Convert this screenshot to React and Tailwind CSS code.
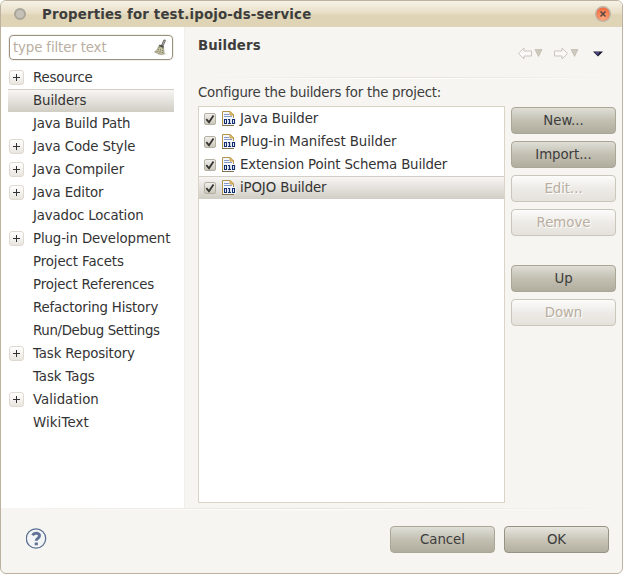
const tree = [
  { label: 'Resource', children: true, tracking: 'tracking-[-0.2px]' },
  { label: 'Builders', selected: true, tracking: 'tracking-[-0.1px]' },
  { label: 'Java Build Path', tracking: 'tracking-[-0.13px]' },
  { label: 'Java Code Style', children: true, tracking: 'tracking-[-0.13px]' },
  { label: 'Java Compiler', children: true, tracking: 'tracking-[-0.1px]' },
  { label: 'Java Editor', children: true, tracking: 'tracking-[-0.13px]' },
  { label: 'Javadoc Location', tracking: 'tracking-[-0.14px]' },
  { label: 'Plug-in Development', children: true, tracking: 'tracking-[-0.12px]' },
  { label: 'Project Facets', tracking: 'tracking-[-0.1px]' },
  { label: 'Project References', tracking: 'tracking-[-0.16px]' },
  { label: 'Refactoring History', tracking: 'tracking-[-0.16px]' },
  { label: 'Run/Debug Settings', tracking: 'tracking-[-0.34px]' },
  { label: 'Task Repository', children: true, tracking: 'tracking-[-0.14px]' },
  { label: 'Task Tags', tracking: 'tracking-[-0.1px]' },
  { label: 'Validation', children: true, tracking: 'tracking-normal' },
  { label: 'WikiText', tracking: 'tracking-[0.1px]' },
];

const builders = [
  { label: 'Java Builder', tracking: 'tracking-[-0.12px]' },
  { label: 'Plug-in Manifest Builder', tracking: 'tracking-[-0.07px]' },
  { label: 'Extension Point Schema Builder', tracking: 'tracking-[-0.16px]' },
  { label: 'iPOJO Builder', selected: true, tracking: 'tracking-[-0.12px]' },
];

const selectedRow = 'border-t border-[#d2cec5] bg-linear-to-b from-[#f7f6f4] to-[#d0cdc4]';

function Expander() {
  return (
    <span className="flex size-[15px] items-center justify-center rounded-[3px] border border-[#dfd9cf] bg-linear-to-b from-white to-[#e9e6e0]">
      <svg width="7" height="7" viewBox="0 0 7 7" shapeRendering="crispEdges">
        <path d="M0 3h7v1H0zM3 0h1v7H3z" fill="#333" />
      </svg>
    </span>
  );
}

function Broom() {
  return (
    <svg width="14" height="17" viewBox="0 0 14 17">
      <ellipse cx="9" cy="15" rx="4.500" ry="1.200" fill="#e6e4dc" />
      <path d="M11.500 1.800 9.300 6.500" stroke="#6c6b66" strokeWidth="2.600" strokeLinecap="round" />
      <path d="M11.600 1.800 9.600 6" stroke="#b5b3aa" strokeWidth=".9" />
      <path d="m6 6.500 4.500 1.800.7 6.200-2.700 1-3-.8L1.500 13C4 11.500 5 9 6 6.500Z" fill="#cbc8a8" stroke="#85836b" strokeWidth=".6" />
      <path d="M6.500 8 4 13.500M8 8.500l-1.500 6M9.800 9l-.5 6M5 10.500l6 1.500M3.500 12.500l7.500 1.500" stroke="#77745c" strokeWidth=".8" strokeDasharray="1 1" />
      <path d="m6.300 6.300 4.400 1.900" stroke="#4c4b45" strokeWidth="1.500" />
    </svg>
  );
}

function CheckBox() {
  return (
    <svg width="12" height="12" viewBox="0 0 12 12">
      <defs>
        <linearGradient id="check-face" x1="0" y1="0" x2="0" y2="1">
          <stop offset="0" stopColor="#f1f0ec" />
          <stop offset="1" stopColor="#c9c6b9" />
        </linearGradient>
      </defs>
      <rect x=".5" y=".5" width="11" height="11" rx="1.500" fill="url(#check-face)" stroke="#b4b1a3" />
      <path d="M2.300 6.200 5 9.300 9.500 2.500" fill="none" stroke="#333330" strokeWidth="1.800" />
    </svg>
  );
}

function BuilderIcon() {
  return (
    <svg width="14" height="15" viewBox="0 0 14 15">
      <path d="M.5 14.500V.5H8L11.500 4v10.500Z" fill="#f4f7fd" stroke="#b2934a" />
      <path d="M8 .5V4h3.500Z" fill="#f0cd7c" stroke="#c09a45" />
      <path d="M2 3.500h5M2 5.500h8" stroke="#8598c8" />
      <path d="M1 7h13v7H1z" fill="#f4f7fd" />
      <path d="M0 14.500h12" stroke="#80724d" />
      <g fill="none" stroke="#142d6e">
        <path d="M2.500 8v5M4.500 8v5M10.500 8v5M12.500 8v5" strokeWidth="1.100" />
        <path d="M3 8.500h1M3 12.500h1M11 8.500h1M11 12.500h1M6 8.500h1M6 12.500h3" />
        <path d="M7.500 8v5" strokeWidth="1.300" />
      </g>
    </svg>
  );
}

function HistoryArrow({ forward }) {
  return (
    <svg width="25" height="13" viewBox="0 0 25 13">
      <path
        d={forward ? 'M13.500 6.500 8 1v3H.5v5H8v3Z' : 'M.5 6.500 6 1v3h7.500v5H6v3Z'}
        fill="#faf9f8"
        stroke="#c9c5bf"
      />
      <path d="M17 2.500h7L20.500 9.500Z" fill="#cfc8be" stroke="#b9b1a4" strokeWidth=".6" />
    </svg>
  );
}

function Button({ children, disabled, isDefault }) {
  const look = disabled
    ? 'border-[#c9c6bb] bg-linear-to-b from-[#fcfcfb] via-[#edebe7] to-[#e5e2dc] text-[#b9ae9f] [text-shadow:1px_1px_0_#fff]'
    : isDefault
      ? 'border-[#969384] bg-linear-to-b from-[#e6e5de] via-[#c9c6b9] to-[#b2af9f] text-[#3d3d3d]'
      : 'border-[#aaa797] bg-linear-to-b from-[#dedfd7] via-[#c3c0b2] to-[#b1ad9e] text-[#3d3d3d]';
  return (
    <button
      disabled={disabled}
      className={`h-[27px] w-[105px] shrink-0 rounded-[4px] border text-center leading-[25px] tracking-[-0.05px] ${look}`}
    >
      {children}
    </button>
  );
}

export default function App() {
  return (
    <div className="h-[574px] w-[623px] bg-white font-['DejaVu_Sans','Liberation_Sans',sans-serif] text-[13.33px] whitespace-nowrap text-[#333]">
      <div className="flex h-full flex-col overflow-hidden rounded-[6px] border border-[#bdb29f] bg-[#f6f5f1]">
        <header className="flex h-[26px] shrink-0 items-center bg-linear-to-b from-[#f6f2e6] via-[#e8dfc8] via-45% to-[#dfd5b6] to-55% pr-[11px] pl-[13px]">
          <span className="size-[12px] rounded-full border-2 border-[#aaa599] bg-[#c5c1b8]" />
          <h1 className="ml-[16px] grow pt-[2px] text-[13.33px] leading-[24px] font-bold tracking-[0.165px] text-[#3d3d3d]">
            Properties for test.ipojo-ds-service
          </h1>
          <svg width="16" height="16" viewBox="0 0 16 16">
            <defs>
              <radialGradient id="close-face" cx=".5" cy=".75" r=".7">
                <stop offset="0" stopColor="#ffaa80" />
                <stop offset="1" stopColor="#f0683c" />
              </radialGradient>
            </defs>
            <circle cx="8" cy="8" r="7.300" fill="url(#close-face)" stroke="#c0b5a6" strokeWidth="1.400" />
            <path d="m5.500 5.500 5 5m0-5-5 5" stroke="#5f4a43" strokeWidth="1.700" />
          </svg>
        </header>

        <main className="flex h-[481px] shrink-0">
          <aside className="w-[184px] shrink-0 border-r border-[#f0eee9] bg-white pt-[8px]">
            <div className="ml-[8px] flex h-[25px] w-[164px] items-center justify-between rounded-[4px] border border-[#9b9080] pr-[5px] pl-[3px] tracking-[-0.13px] text-[#b9ae9f] shadow-[0_0_0_1px_#f2f0ed]">
              <span>type filter text</span>
              <Broom />
            </div>
            <ul className="mt-[6px] ml-[7px] w-[166px]">
              {tree.map((item) => (
                <li key={item.label} className={`flex h-[23px] items-center pl-px ${item.selected ? selectedRow : ''}`}>
                  <span className="w-[24px]">{item.children && <Expander />}</span>
                  <span className={`leading-[22px] ${item.tracking}`}>{item.label}</span>
                </li>
              ))}
            </ul>
          </aside>

          <section className="flex grow flex-col pl-[13px]">
            <div className="flex h-[50px] shrink-0 items-start justify-between pr-[19px]">
              <h2 className="pt-[10px] text-[13.33px] leading-[18px] font-bold tracking-[0.1px] text-[#3d3d3d]">
                Builders
              </h2>
              <div className="flex items-center pt-[20px]">
                <HistoryArrow />
                <span className="ml-[11px] flex">
                  <HistoryArrow forward />
                </span>
                <svg className="ml-[14px]" width="10" height="6" viewBox="0 0 10 6">
                  <path d="M0 .5h10L5 5.500Z" fill="#17162d" />
                  <path d="M1.500 1h5L5 4Z" fill="#514887" />
                </svg>
              </div>
            </div>
            <div className="h-px shrink-0 bg-linear-to-r from-transparent via-[#e7e3da] to-transparent" />
            <div className="h-px shrink-0 bg-linear-to-r from-transparent via-white to-transparent" />
            <p className="h-[27px] shrink-0 pt-[5px] leading-[18px] tracking-[-0.23px] text-[#3d3d3d]">
              Configure the builders for the project:
            </p>
            <div className="flex">
              <ul className="h-[397px] w-[307px] border border-[#d9d4c6] bg-white">
                {builders.map((builder) => (
                  <li
                    key={builder.label}
                    className={`flex h-[23px] items-center pl-[5px] ${builder.selected ? selectedRow : 'pt-px'}`}
                  >
                    <CheckBox />
                    <span className="mr-[4px] ml-[6px] flex pb-px">
                      <BuilderIcon />
                    </span>
                    <span className={`leading-[22px] ${builder.tracking}`}>{builder.label}</span>
                  </li>
                ))}
              </ul>
              <div className="ml-[6px] flex flex-col gap-[7px] pt-px">
                <Button>New...</Button>
                <Button>Import...</Button>
                <Button disabled>Edit...</Button>
                <Button disabled>Remove</Button>
                <div className="mt-[22px] flex flex-col gap-[7px]">
                  <Button>Up</Button>
                  <Button disabled>Down</Button>
                </div>
              </div>
            </div>
          </section>
        </main>

        <footer className="grow">
          <div className="h-px bg-linear-to-r from-transparent via-[#e5e2d9] to-transparent" />
          <div className="h-px bg-linear-to-r from-transparent via-white to-transparent" />
          <div className="flex items-center gap-[9px] pt-[16px] pr-[13px] pl-[25px]">
            <svg className="mr-auto -mt-[3px]" width="21" height="21" viewBox="0 0 21 21">
              <circle cx="10" cy="10.500" r="9.700" fill="#f3f4f6" stroke="#5b7092" strokeWidth="1.300" />
              <path d="M6.500 7.200c1.600-2.900 7-2.500 7 .6 0 2.500-3.300 2.500-3.300 5" fill="none" stroke="#637397" strokeWidth="2.900" />
              <path d="M8.700 14.400h3.200v2.800H8.700z" fill="#637397" />
            </svg>
            <Button>Cancel</Button>
            <Button isDefault>OK</Button>
          </div>
        </footer>
      </div>
    </div>
  );
}
